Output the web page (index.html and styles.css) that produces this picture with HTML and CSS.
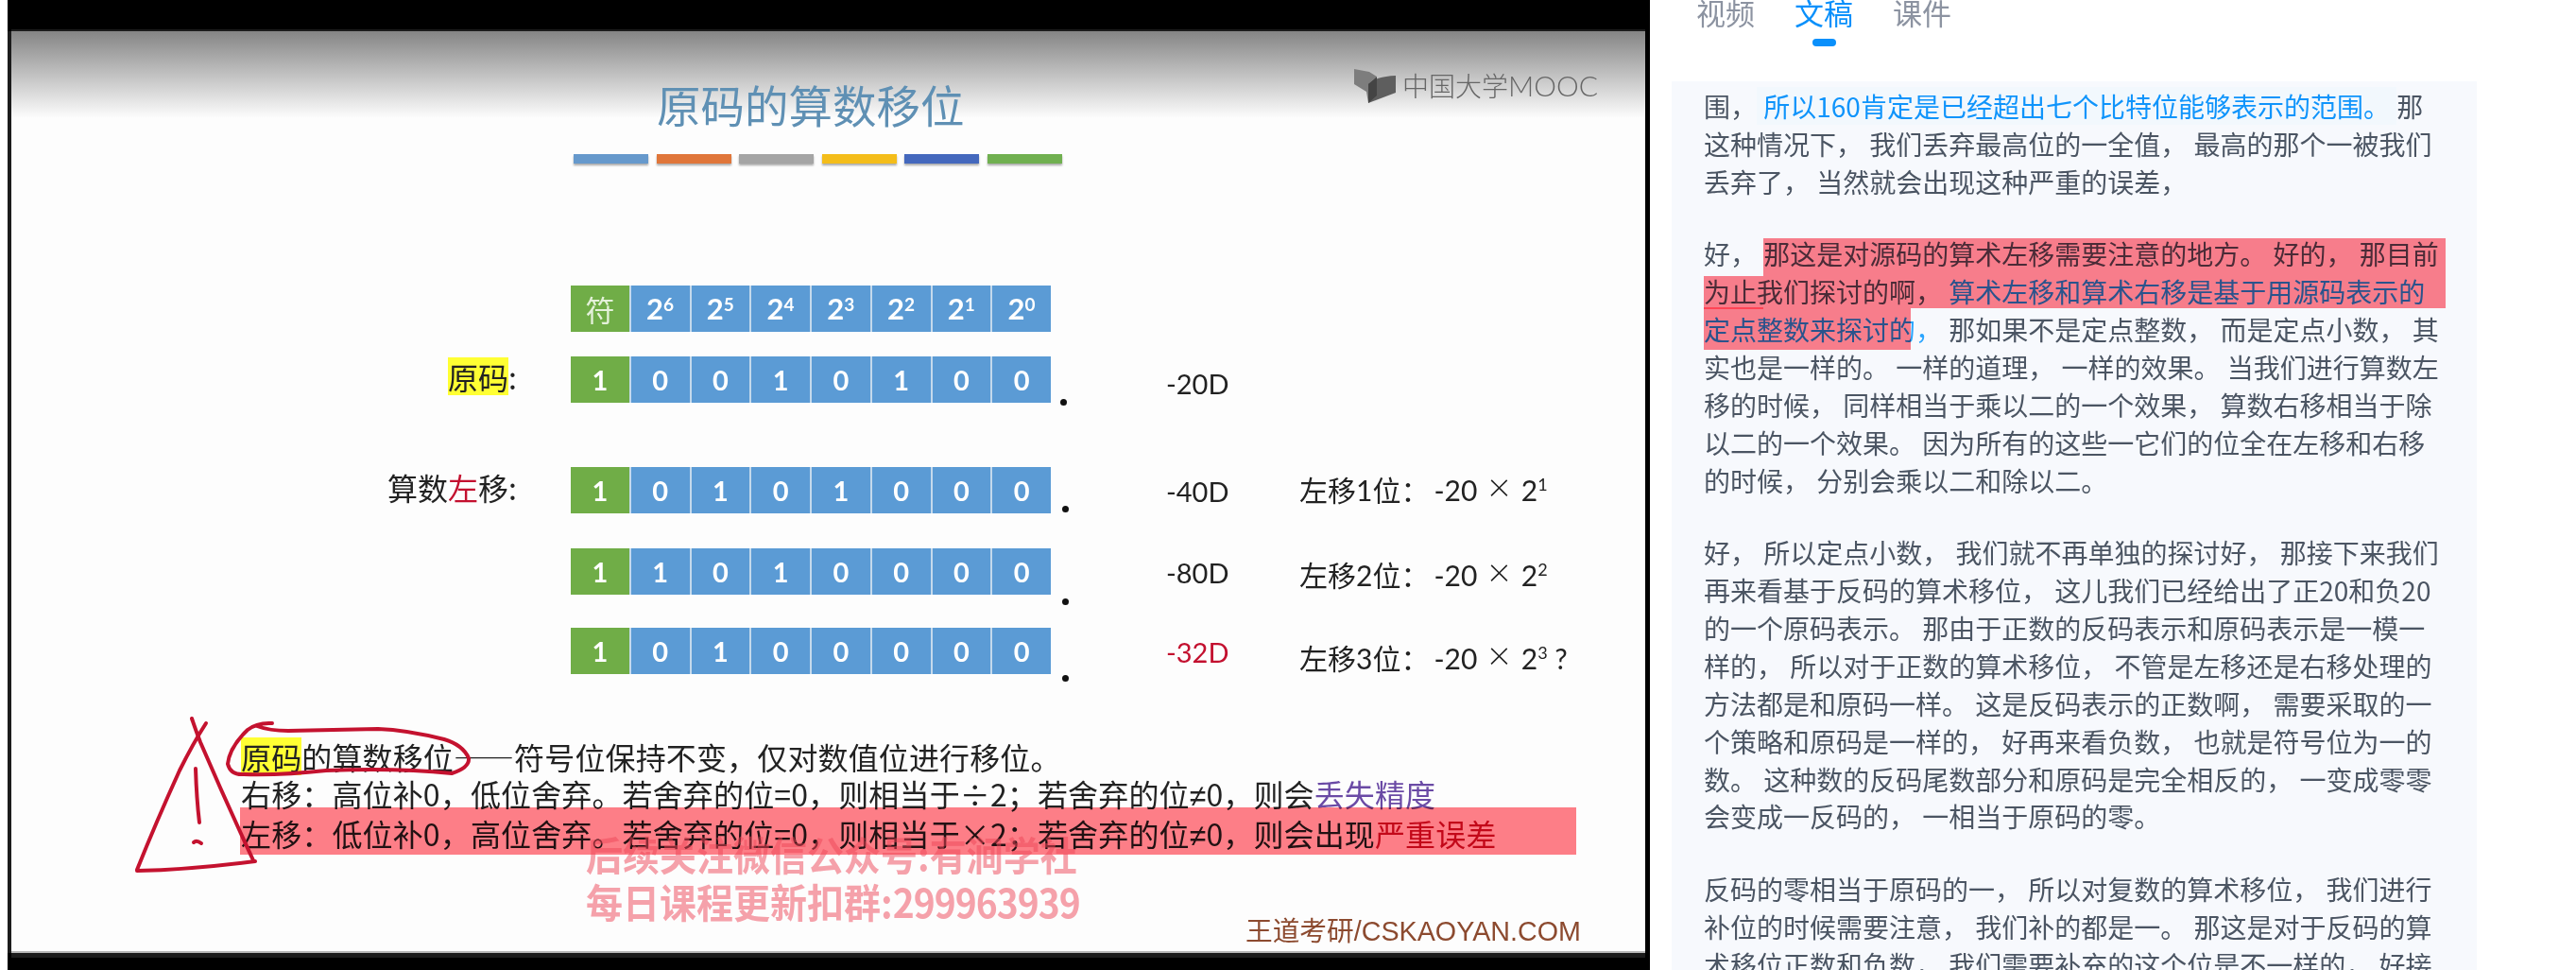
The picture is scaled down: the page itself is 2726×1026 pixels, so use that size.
FILE: index.html
```html
<!DOCTYPE html>
<html lang="zh-CN">
<head>
    <meta charset="UTF-8" />
    <meta name="viewport" content="width=device-width, initial-scale=1" />
    <title>原码的算数移位 - 文稿</title>
    <link rel="stylesheet" href="styles.css">
</head>
<body>
    <main class="video">
        <section class="slide">
            <div class="logo">
                <svg class="logo-icon" viewBox="0 0 44 36" width="44" height="36">
                    <path d="M0 0 L16 3 L24 8 L16 15 L15 36 L13 24 L0 16 Z" fill="#7d7d7d"/>
                    <path d="M15 36 L15 16 Q22 8 44 7 L44 25 Z" fill="#5e5e5e"/>
                    <path d="M15 16 L24 8 L24 28 L15 36 Z" fill="#444"/>
                </svg>
                <span>中国大学<em>MOOC</em></span>
            </div>

            <h1 class="title">原码的算数移位</h1>
            <div class="bars">
                <i class="bar c-blue"></i>
                <i class="bar c-orange"></i>
                <i class="bar c-gray"></i>
                <i class="bar c-yellow"></i>
                <i class="bar c-navy"></i>
                <i class="bar c-green"></i>
            </div>

            <!-- Tabla de bits -->
            <div class="bit-row row-head">
                <div class="label"></div>
                <div class="cells">
                    <b class="sign sign-char">符</b>
                    <b>2<sup>6</sup></b><b>2<sup>5</sup></b><b>2<sup>4</sup></b><b>2<sup>3</sup></b>
                    <b>2<sup>2</sup></b><b>2<sup>1</sup></b><b>2<sup>0</sup></b>
                </div>
            </div>
            <div class="bit-row row-orig">
                <div class="label"><span class="mark">原码</span>:</div>
                <div class="cells">
                    <b class="sign">1</b><b>0</b><b>0</b><b>1</b><b>0</b><b>1</b><b>0</b><b>0</b>
                </div>
                <i class="dot"></i>
                <div class="value">-20D</div>
            </div>
            <div class="bit-row row-l1">
                <div class="label">算数<span class="red">左</span>移:</div>
                <div class="cells">
                    <b class="sign">1</b><b>0</b><b>1</b><b>0</b><b>1</b><b>0</b><b>0</b><b>0</b>
                </div>
                <i class="dot"></i>
                <div class="value">-40D</div>
                <div class="note">左移1位：<span class="num">-20</span><span class="times">×</span>2<sup>1</sup></div>
            </div>
            <div class="bit-row row-l2">
                <div class="label"></div>
                <div class="cells">
                    <b class="sign">1</b><b>1</b><b>0</b><b>1</b><b>0</b><b>0</b><b>0</b><b>0</b>
                </div>
                <i class="dot"></i>
                <div class="value">-80D</div>
                <div class="note">左移2位：<span class="num">-20</span><span class="times">×</span>2<sup>2</sup></div>
            </div>
            <div class="bit-row row-l3">
                <div class="label"></div>
                <div class="cells">
                    <b class="sign">1</b><b>0</b><b>1</b><b>0</b><b>0</b><b>0</b><b>0</b><b>0</b>
                </div>
                <i class="dot"></i>
                <div class="value red">-32D</div>
                <div class="note">左移3位：<span class="num">-20</span><span class="times">×</span>2<sup>3</sup> ?</div>
            </div>

            <div class="rules">
                <p><span class="mark">原码</span>的算数移位——符号位保持不变，仅对数值位进行移位。</p>
                <p>右移：高位补0，低位舍弃。若舍弃的位=0，则相当于÷2；若舍弃的位<span class="ne">≠</span>0，则会<span class="purple">丢失精度</span></p>
                <p>左移：低位补0，高位舍弃。若舍弃的位=0，则相当于×2；若舍弃的位<span class="ne">≠</span>0，则会出现<span class="red">严重误差</span></p>
            </div>
            <div class="band"></div>

            <div class="watermark">
                <div>后续关注微信公众号:有涧学社</div>
                <div>每日课程更新扣群:<span class="qq">299963939</span></div>
            </div>
            <div class="source">王道考研/CSKAOYAN.COM</div>
        </section>

        <!-- Trazos a mano del profesor -->
        <svg class="ink" viewBox="8 0 1738 1026" width="1738" height="1026">
            <path d="M203 760 Q207 772 212 785 Q240 850 268 910"/>
            <path d="M218 765 Q205 785 190 815 Q165 870 145 920"/>
            <path d="M145 921 Q200 920 270 911"/>
            <path d="M207 813 Q208 845 211 870"/>
            <path d="M205 891 Q208 888 213 892"/>
            <path d="M288 765 Q272 764 262 772 Q243 790 241 808 Q244 820 258 819 Q300 820 345 815 Q420 812 478 818 Q497 812 496 802 Q490 788 470 782 Q430 772 400 771 Q350 772 305 773 Q285 773 272 768"/>
        </svg>
    </main>

    <aside class="side">
        <nav class="tabs">
            <a class="tab">视频</a>
            <a class="tab active">文稿</a>
            <a class="tab">课件</a>
        </nav>
        <div class="script">
            <p>围，<span class="now"> 所以160肯定是已经超出七个比特位能够表示的范围。 </span>那<br>
            这种情况下， 我们丢弃最高位的一全值， 最高的那个一被我们<br>
            丢弃了， 当然就会出现这种严重的误差，</p>

            <p class="noted">好， 那这是对源码的算术左移需要注意的地方。 好的， 那目前<br>
            为止我们探讨的啊， <span class="blue">算术左移和算术右移是基于用源码表示的<br>
            定点整数来探讨的，</span> 那如果不是定点整数， 而是定点小数， 其<br>
            实也是一样的。 一样的道理， 一样的效果。 当我们进行算数左<br>
            移的时候， 同样相当于乘以二的一个效果， 算数右移相当于除<br>
            以二的一个效果。 因为所有的这些一它们的位全在左移和右移<br>
            的时候， 分别会乘以二和除以二。
                <i class="hl hl-1"></i><i class="hl hl-2"></i><i class="hl hl-3"></i><i class="hl-line"></i>
            </p>

            <p>好， 所以定点小数， 我们就不再单独的探讨好， 那接下来我们<br>
            再来看基于反码的算术移位， 这儿我们已经给出了正20和负20<br>
            的一个原码表示。 那由于正数的反码表示和原码表示是一模一<br>
            样的， 所以对于正数的算术移位， 不管是左移还是右移处理的<br>
            方法都是和原码一样。 这是反码表示的正数啊， 需要采取的一<br>
            个策略和原码是一样的， 好再来看负数， 也就是符号位为一的<br>
            数。 这种数的反码尾数部分和原码是完全相反的， 一变成零零<br>
            会变成一反码的， 一相当于原码的零。</p>

            <p>反码的零相当于原码的一， 所以对复数的算术移位， 我们进行<br>
            补位的时候需要注意， 我们补的都是一。 那这是对于反码的算<br>
            术移位正数和负数， 我们需要补充的这个位是不一样的， 好接</p>
        </div>
    </aside>
</body>
</html>
```
FILE: styles.css
```css
* {
    box-sizing: border-box;
}
html, body {
    height: 1026px;
    overflow: hidden;
}
body {
    margin: 0;
    display: flex;
    background: #fff;
    font-family: "Noto Sans CJK SC", sans-serif;
}

/* Video */
.video {
    position: relative;
    flex: none;
    width: 1738px;
    height: 1026px;
    margin-left: 8px;
    padding: 33px 5px 0 4px;
    background: #000;
}
.slide {
    position: relative;
    height: 975px;
    padding-top: 54px;
    background: linear-gradient(#858585, #fdfdfd 92px);
    border-bottom: 2px solid #b8b8b8;
    box-shadow: -4px 0 0 #1c1c1c, 0 5px 0 #1c1c1c, 0 -2px 0 #1c1c1c;
    filter: blur(.5px);
    white-space: nowrap;
    color: #222;
}
.ink {
    position: absolute;
    left: 0;
    top: 0;
    fill: none;
    stroke: #c4122f;
    stroke-width: 4;
    stroke-linecap: round;
}

.logo {
    position: absolute;
    left: 1421px;
    top: 39px;
    display: flex;
    align-items: center;
    gap: 7px;
    color: #666;
    font-family: Lato, "Noto Sans CJK SC", sans-serif;
    font-weight: 300;
    font-size: 28px;
    line-height: 36px;
}
.logo em {
    font-style: normal;
    font-size: 30px;
}

.title {
    margin: 0 0 0 683px;
    font-size: 46.5px;
    font-weight: 400;
    line-height: 46px;
    color: #5f90b4;
}
.bars {
    display: flex;
    gap: 8.5px;
    margin: 30px 0 0 595px;
}
.bar {
    width: 79px;
    height: 10px;
    box-shadow: 0 2px 2px #aaa;
}
.c-blue { background: #6699cc; }
.c-orange { background: #e0763a; }
.c-gray { background: #a5a5a5; }
.c-yellow { background: #f4bd1a; }
.c-navy { background: #4468bd; }
.c-green { background: #70b050; }

.bit-row {
    display: grid;
    grid-template-columns: 592px 508px 122px 141px auto;
    grid-template-rows: 49px;
    font-family: Lato, "Noto Sans CJK SC", sans-serif;
}
.row-head { margin-top: 129px; }
.row-orig { margin-top: 26px; }
.row-l1 { margin-top: 68px; }
.row-l2 { margin-top: 37px; }
.row-l3 { margin-top: 35px; }

.label {
    padding-right: 57px;
    text-align: right;
    font-family: "Noto Sans CJK SC", sans-serif;
    font-size: 32px;
    line-height: 42px;
}
.cells {
    display: grid;
    grid-template-columns: repeat(8, 1fr);
    gap: 2px;
    background: #c4d9ec;
}
.cells b {
    display: flex;
    justify-content: center;
    align-items: center;
    background: #5b9bd5;
    color: #fff;
    font-size: 29px;
    font-weight: 700;
    line-height: 1;
}
.row-head .cells b {
    font-size: 31px;
}
.cells .sign {
    background: #70ad47;
}
.cells .sign-char {
    font-family: "Noto Sans CJK SC", sans-serif;
    font-weight: 400;
    color: #e4f1da;
}
.cells sup {
    margin-top: -10px;
    font-size: 19px;
}
.dot {
    width: 7px;
    height: 7px;
    margin-left: 10px;
    border-radius: 50%;
    background: #111;
}
.row-orig .dot { margin-top: 45px; }
.row-l1 .dot { margin-top: 41px; margin-left: 12px; }
.row-l2 .dot { margin-top: 53px; margin-left: 12px; }
.row-l3 .dot { margin-top: 50px; margin-left: 12px; }

.value {
    font-size: 29px;
    line-height: 49px;
}
.row-orig .value { margin-top: 4px; }
.row-l1 .value, .row-l2 .value, .row-l3 .value { margin-top: 1px; }

.note {
    font-size: 30px;
    line-height: 49px;
}
.row-l1 .note { margin-top: 0; }
.row-l2 .note { margin-top: 4px; }
.row-l3 .note { margin-top: 8px; }
.note sup {
    font-size: 18px;
    line-height: 0;
}
.num {
    margin-left: 5px;
}
.times {
    margin: 0 11px;
    font-size: 42px;
    font-weight: 300;
    line-height: 0;
}

.mark {
    display: inline-block;
    background: #ffff33;
    line-height: 40px;
}
.red { color: #c3102f; }
.purple { color: #6a4aa5; }

.rules {
    margin: 67px 0 0 243px;
    font-size: 32px;
    line-height: 38.5px;
    letter-spacing: .14px;
}
.rules p {
    margin: 0;
}
.ne {
    font-family: "Liberation Sans", sans-serif;
}
.band {
    position: absolute;
    left: 242px;
    top: 821px;
    width: 1414px;
    height: 50px;
    background: #ff7f88;
    mix-blend-mode: multiply;
}
.watermark {
    position: absolute;
    left: 608px;
    top: 845px;
    color: rgba(238, 70, 88, .5);
    font-size: 39px;
    font-weight: 700;
    line-height: 46px;
    transform: scaleY(1.08);
    transform-origin: top left;
}
.watermark .qq {
    letter-spacing: -1px;
}
.source {
    margin: 66px 0 0 1306px;
    color: #8c4a2f;
    font-family: "Liberation Sans", "Noto Sans CJK SC", sans-serif;
    font-size: 28.7px;
    line-height: 32px;
}

/* Panel derecho */
.side {
    flex: none;
    width: 875px;
    padding-left: 23px;
}
.tabs {
    display: flex;
    gap: 42px;
    height: 89px;
    margin-top: -3px;
    padding-left: 26px;
}
.tab {
    display: block;
    position: relative;
    color: #8c93a1;
    font-size: 31px;
    line-height: 31px;
}
.tab.active {
    color: #0a90fb;
}
.tab.active::after {
    content: "";
    display: block;
    width: 25px;
    height: 8px;
    margin: 13px auto 0;
    border-radius: 4px;
    background: #0a90fb;
}
.script {
    width: 852px;
    height: 940px;
    padding: 7px 0 0 34px;
    overflow: hidden;
    background: #f7f9fd;
    color: #4b5563;
    font-size: 28px;
    line-height: 39.9px;
    word-spacing: 1px;
    white-space: nowrap;
}
.script p {
    margin: 0 0 36.5px;
}
.now {
    background: #f2f8fd;
    color: #0f94fb;
}
.noted {
    position: relative;
}
.blue {
    color: #2aa5ff;
}
.hl {
    position: absolute;
    background: #ff808c;
    mix-blend-mode: multiply;
}
.hl-1 { left: 63px; top: 3px; width: 722px; height: 40px; }
.hl-2 { left: 0; top: 43px; width: 785px; height: 34px; }
.hl-3 { left: 0; top: 77px; width: 219px; height: 44px; }
.hl-line {
    position: absolute;
    left: 0;
    top: 76px;
    width: 63px;
    height: 2px;
    background: #ff4455;
}
```
